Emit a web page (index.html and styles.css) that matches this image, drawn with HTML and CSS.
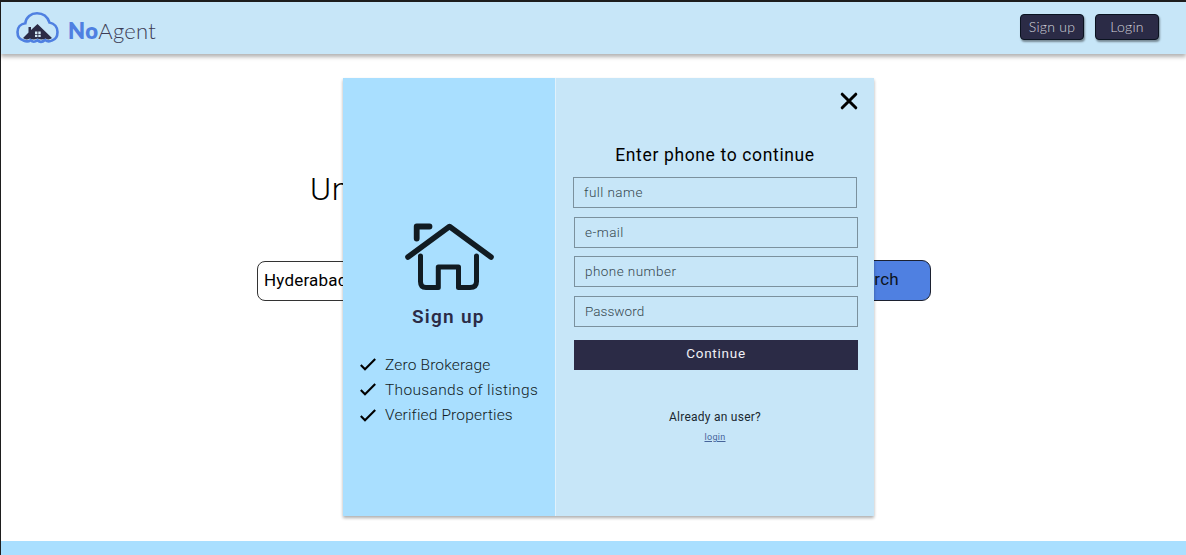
FILE: index.html
```html
<!DOCTYPE html>
<html lang="en">
<head>
<meta charset="utf-8">
<title>NoAgent</title>
<link rel="stylesheet" href="styles.css">
</head>
<body>
<div class="page">
  <header class="navbar">
    <a class="brand">
      <svg class="brand-logo" width="45" height="34" viewBox="0 0 45 34">
        <path d="M8.500 30.500C4.500 29.500 2.500 26 2.500 22C2.500 17.500 5.500 14 10.300 13.300C11 7 16 3.300 22 3.300C28.500 3.300 32.500 6.800 34.500 12.500C39.500 13.500 42.500 17.500 42.500 22C42.500 26 40.500 29.500 37 30.500C34.500 32 32 31.500 30 30C27.500 32.200 24.500 32.200 22.500 30.300C20 32.200 17.500 32.200 15.500 30.200C13.500 31.800 11 31.700 8.500 30.500Z" fill="none" stroke="#4f80e1" stroke-width="2.600"/>
        <path d="M8 28L13.500 22.500V17H16V20L22.500 14L37 28Q34 30.500 30.500 28.500Q26.500 30.500 22.500 28.500Q18.500 30.500 15 28.500Q11 30.500 8 28Z" fill="#2b2b46"/>
        <path d="M20 21.500h2.400v2.400h-2.400zM23.300 21.500h2.400v2.400h-2.400zM20 24.700h2.400v2.400h-2.400zM23.300 24.700h2.400v2.400h-2.400z" fill="#d4e9f5"/>
      </svg>
      <span class="brand-name"><b>No</b><span class="brand-rest">Agent</span></span>
    </a>
    <nav class="nav-actions">
      <button class="nav-button">Sign up</button>
      <button class="nav-button">Login</button>
    </nav>
  </header>
  <main class="hero">
    <h1 class="hero-title">Un</h1>
    <div class="search-row">
      <div class="city">Hyderabad</div>
      <button class="search-button">Search</button>
    </div>
  </main>
  <footer class="footer"></footer>
</div>
<section class="modal">
  <aside class="promo">
    <svg class="house" width="90" height="68" viewBox="0 0 90 68" fill="none" stroke="#111b22" stroke-linecap="round" stroke-linejoin="round">
      <path d="M3 34L44.500 3.500L86 34" stroke-width="5.600"/>
      <path d="M11.700 15.500V3.500H24.500" stroke-width="5.800"/>
      <path d="M15.500 33V58.500Q15.500 64.500 21 64.500H33.300V44H53.500V64.500H65Q71.500 64.500 71.500 58.500V33" stroke-width="5"/>
    </svg>
    <h2 class="promo-title">Sign up</h2>
    <ul class="benefits">
      <li class="benefit"><svg class="check" width="16" height="13" viewBox="0 0 16 13"><path d="M.8 7L5 11.200L15.200 1" fill="none" stroke="#000" stroke-width="2.100"/></svg><span class="b-zero">Zero Brokerage</span></li>
      <li class="benefit"><svg class="check" width="16" height="13" viewBox="0 0 16 13"><path d="M.8 7L5 11.200L15.200 1" fill="none" stroke="#000" stroke-width="2.100"/></svg><span class="b-list">Thousands of listings</span></li>
      <li class="benefit"><svg class="check" width="16" height="13" viewBox="0 0 16 13"><path d="M.8 7L5 11.200L15.200 1" fill="none" stroke="#000" stroke-width="2.100"/></svg><span class="b-verified">Verified Properties</span></li>
    </ul>
  </aside>
  <div class="panel">
    <svg class="close" width="18" height="18" viewBox="0 0 18 18"><path d="M2.200 2.200L15.800 15.800M15.800 2.200L2.200 15.800" stroke="#000" stroke-width="3" stroke-linecap="round"/></svg>
    <h2 class="panel-title">Enter phone to continue</h2>
    <form class="form">
      <div class="field first">full name</div>
      <div class="field">e-mail</div>
      <div class="field">phone number</div>
      <div class="field f-pass">Password</div>
      <button type="button" class="continue">Continue</button>
    </form>
    <p class="already">Already an user?</p>
    <a class="login-link">login</a>
  </div>
</section>
</body>
</html>
```
FILE: styles.css
```css
* { box-sizing: border-box; }
body { margin: 0; background: #fff; font-family: Roboto, "Liberation Sans", sans-serif; color: #000; overflow: hidden; }
h1, h2, p, ul { margin: 0; padding: 0; font-weight: 400; }
button { font-family: inherit; padding: 0; }
span, h1, h2, p, a { white-space: nowrap; }

.page { height: 555px; display: flex; flex-direction: column; border-top: 2px solid #1e1e1e; border-left: 1px solid #1e1e1e; }
.navbar { height: 52px; flex: none; display: flex; justify-content: space-between; padding: 8px 27px 0 14px; background: #c7e6f8; box-shadow: 0 3px 4px rgba(0, 0, 0, .3); }
.brand { display: flex; gap: 8px; }
.brand-name { font-family: Lato, sans-serif; font-size: 22px; line-height: 42px; color: #4f80e1; }
.brand-name b { font-weight: 800; letter-spacing: .4px; }
.brand-rest { font-weight: 300; color: #3c3c55; letter-spacing: .25px; }
.nav-actions { display: flex; gap: 11px; padding-top: 4px; }
.nav-button { width: 64px; height: 26px; border: 1px solid #0b1320; border-radius: 4px; background: #2b2b46; color: #d3d3dc; font: 300 14px/22px Lato, sans-serif; letter-spacing: .25px; box-shadow: 1px 2px 2px rgba(0, 0, 0, .4); }

.hero { flex: 1; padding: 114px 255px 0 256px; }
.hero-title { margin-left: 53px; font-size: 32px; line-height: 42px; font-weight: 300; letter-spacing: .6px; }
.search-row { display: flex; justify-content: space-between; margin-top: 50px; }
.city { width: 330px; height: 40px; margin-top: 1px; padding-left: 6px; border: 1px solid #333; border-radius: 8px; font-size: 17px; line-height: 37px; letter-spacing: .2px; }
.search-button { width: 110px; height: 41px; padding: 0 8px 2px 0; border: 1px solid #1c2130; border-radius: 9px; background: #4f80e1; font-size: 17px; line-height: 37px; color: #0d1420; letter-spacing: .3px; }
.footer { height: 14px; flex: none; background: #a9dfff; }

.modal { position: absolute; left: 343px; top: 78px; width: 531px; height: 438px; display: flex; box-shadow: 0 2px 3px rgba(0, 0, 0, .32); }
.promo { width: 213px; flex: none; display: flex; flex-direction: column; padding-top: 145px; background: #a9dfff; border-right: 1px solid #e0f1fb; }
.house { margin-left: 62px; }
.promo-title { margin: 12px 0 0 69px; font-size: 19px; line-height: 27px; font-weight: 600; color: #2b2b46; letter-spacing: 1.250px; }
.benefits { list-style: none; margin: 22px 0 0 17px; }
.benefit { display: flex; align-items: center; gap: 9px; height: 25.300px; font-size: 15.500px; font-weight: 300; color: #111c24; }
.b-zero, .b-verified { letter-spacing: .16px; }
.b-list { letter-spacing: .35px; }
.panel { flex: 1; display: flex; flex-direction: column; align-items: center; background: #c7e6f8; }
.close { margin: 14px 16px 0 0; align-self: flex-end; }
.panel-title { margin-top: 33px; font-size: 17.500px; line-height: 25px; letter-spacing: .64px; }
.form { width: 284px; margin: 9px 0 0 2px; }
.field { height: 31px; margin-bottom: 8.600px; padding-left: 10px; border: 1px solid #7b919e; font-size: 13.500px; line-height: 29px; font-weight: 300; color: #35464f; letter-spacing: .45px; }
.first { margin-left: -1px; margin-right: 1px; }
.f-pass { letter-spacing: .05px; }
.continue { display: block; width: 284px; height: 30px; margin-top: 13px; border: 0; background: #2b2b46; color: #f0f0f5; font-size: 13.500px; line-height: 27px; letter-spacing: .75px; padding-bottom: 3px; }
.already { margin-top: 38px; font-size: 12px; line-height: 18px; color: #1a2830; letter-spacing: .25px; }
.login-link { margin-top: 4px; font-size: 9px; line-height: 14px; color: #46649a; text-decoration: underline; letter-spacing: .3px; }
```
